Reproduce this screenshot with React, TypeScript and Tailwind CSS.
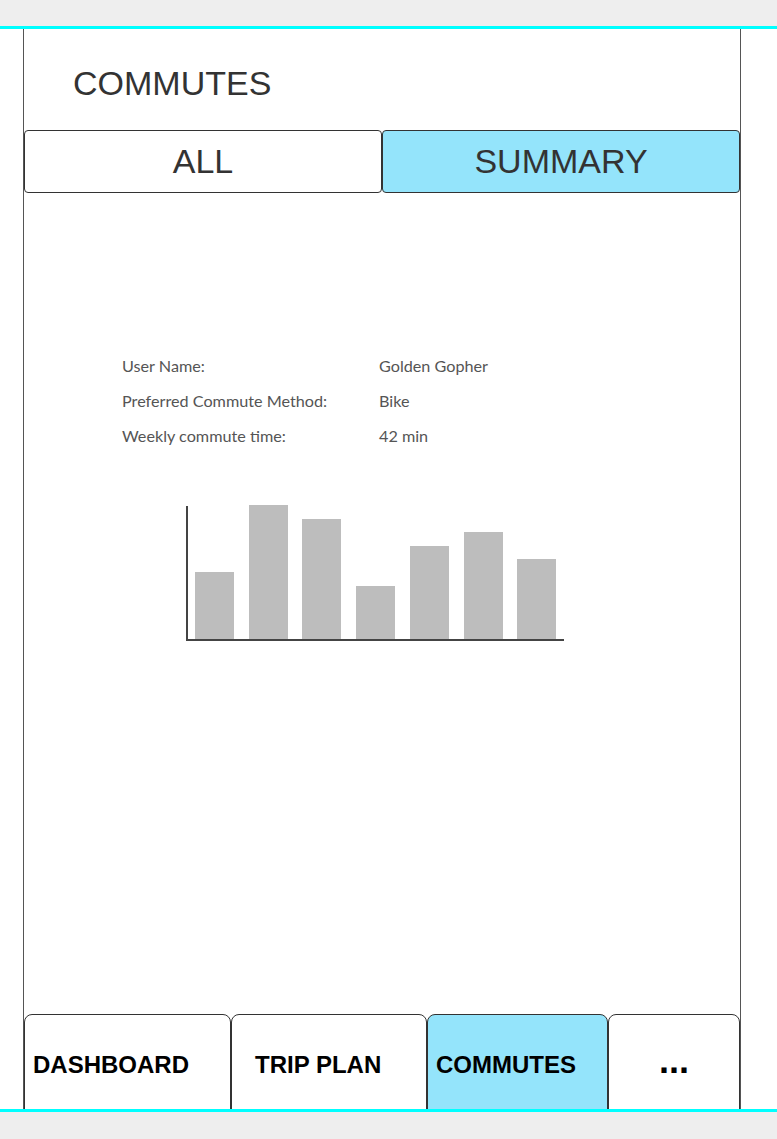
const rows = [
  { label: "User Name:", value: "Golden Gopher" },
  { label: "Preferred Commute Method:", value: "Bike" },
  { label: "Weekly commute time:", value: "42 min" },
];

// bar x positions / tops measured against chart origin
const bars = [
  { x: 9, top: 67 },
  { x: 63, top: 0 },
  { x: 116, top: 14 },
  { x: 170, top: 81 },
  { x: 224, top: 41 },
  { x: 278, top: 27 },
  { x: 331, top: 54 },
];

const WeeklyChart = () => (
  <svg width="380" height="138" viewBox="0 0 380 138" className="block">
    {bars.map((b, i) => (
      <rect key={i} x={b.x} y={b.top} width={39} height={134 - b.top} fill="#bdbdbd" />
    ))}
    <line x1="1" y1="1" x2="1" y2="135" stroke="#444" strokeWidth="2" />
    <line x1="0" y1="135" x2="378" y2="135" stroke="#444" strokeWidth="2" />
  </svg>
);

const NavButton = ({
  label,
  width,
  active,
  className,
}: {
  label: string;
  width: string;
  active?: boolean;
  className?: string;
}) => (
  <div
    className={`${width} h-[104px] shrink-0 rounded-lg border border-[#333] ${
      active ? "bg-[#94e4fb]" : "bg-white"
    } ${className ?? ""}`}
  >
    {label}
  </div>
);

export default function App() {
  return (
    <div className="w-[777px] h-[1139px] bg-[#eeeeee] flex flex-col" style={{ fontFamily: '"Liberation Sans", Arial, sans-serif' }}>
      <div className="h-[26px] shrink-0" />
      <div className="h-[3px] shrink-0 bg-[#00ffff]" />
      <div className="h-[1080px] shrink-0 bg-white overflow-hidden">
        <div className="ml-[23px] w-[718px] h-full border-x border-[#555] flex flex-col">
          <div className="h-[101px] shrink-0 pl-[49px] pt-[37px]">
            <h1 className="text-[34px] leading-[34px] text-[#333]">COMMUTES</h1>
          </div>

          <div className="h-[63px] shrink-0 flex">
            <button className="flex-1 border border-[#333] rounded-[4px] bg-white text-[34px] text-[#333] flex items-center justify-center">
              ALL
            </button>
            <button className="flex-1 border border-[#333] rounded-[4px] bg-[#94e4fb] text-[34px] text-[#333] flex items-center justify-center">
              SUMMARY
            </button>
          </div>

          <div className="flex-1 flex flex-col pt-[155px]">
            <div className="pl-[98px] text-[16.2px] leading-[35px] text-[#555]" style={{ fontFamily: "Lato, sans-serif" }}>
              {rows.map((r) => (
                <div key={r.label} className="flex">
                  <span className="w-[257px] shrink-0">{r.label}</span>
                  <span>{r.value}</span>
                </div>
              ))}
            </div>
            <div className="mt-[52px] ml-[162px]">
              <WeeklyChart />
            </div>
          </div>

          <div className="h-[95px] shrink-0 flex font-bold text-black">
            <NavButton label="DASHBOARD" width="w-[207px]" className="pl-[8px] pt-[38px] text-[24px] leading-[24px]" />
            <NavButton label="TRIP PLAN" width="w-[196px]" className="pl-[23px] pt-[38px] text-[24px] leading-[24px]" />
            <NavButton label="COMMUTES" width="w-[181px]" active className="pl-[8px] pt-[38px] text-[24px] leading-[24px]" />
            <NavButton label="..." width="w-[132px]" className="text-center pt-[28px] text-[36px] leading-[36px]" />
          </div>
        </div>
      </div>
      <div className="h-[3px] shrink-0 bg-[#00ffff]" />
      <div className="flex-1" />
    </div>
  );
}
